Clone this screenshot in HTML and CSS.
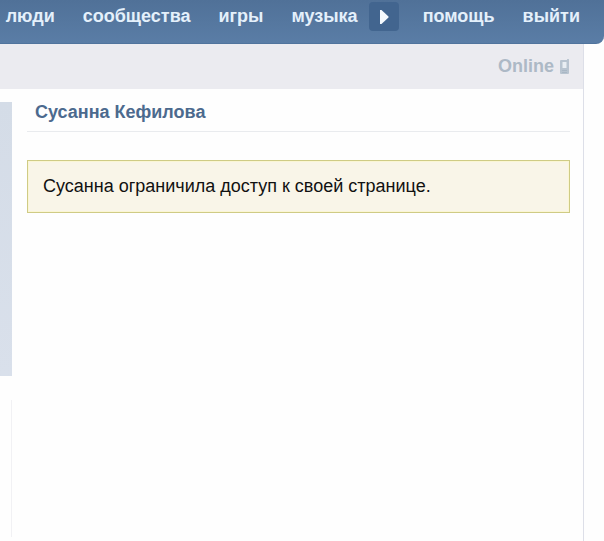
FILE: index.html
```html
<!DOCTYPE html>
<html lang="ru">
<head>
<meta charset="utf-8">
<title>Сусанна Кефилова</title>
<link rel="stylesheet" href="styles.css">
</head>
<body>
<header class="topbar">
  <nav class="nav">
    <a href="#">люди</a>
    <a href="#">сообщества</a>
    <a href="#">игры</a>
    <div class="music">
      <a href="#">музыка</a>
      <button class="play" type="button" aria-label="Слушать">
        <svg width="10" height="16" viewBox="0 0 10 16"><path d="M1 1h1.500l7 6.500v1L2.500 15H1z" fill="#f5fafe"/></svg>
      </button>
    </div>
    <a href="#">помощь</a>
    <a href="#">выйти</a>
  </nav>
</header>
<div class="page">
  <div class="status">
    <span>Online</span>
    <svg width="10" height="16" viewBox="0 0 10 16"><path d="M7 0h2v3H7z" fill="#bcc7d2"/><rect y="1" width="9" height="14" rx="1" fill="#b8c4d0"/><path d="M2.500 3h4v6h-4z" fill="#e9eef3"/><path d="M2 11.500h5M2 13.500h5" stroke="#a9b7c5"/></svg>
  </div>
  <div class="columns">
    <aside class="side">
      <div class="photo"></div>
      <div class="rule"></div>
    </aside>
    <main class="profile">
      <h1>Сусанна Кефилова</h1>
      <p class="notice">Сусанна ограничила доступ к своей странице.</p>
    </main>
  </div>
</div>
</body>
</html>
```
FILE: styles.css
```css
* {
  box-sizing: border-box;
}

body {
  display: flex;
  flex-direction: column;
  min-height: 100vh;
  margin: 0;
  background: #fefefe;
  color: #111;
  font-family: "Liberation Sans", Arial, sans-serif;
  font-size: 18px;
}

.topbar {
  height: 44px;
  padding: 1px 24px 0 0;
  border-bottom: 1px solid #50749d;
  border-radius: 0 0 8px 0;
  background: linear-gradient(#507198, #5a7da6);
}

.nav {
  display: flex;
  align-items: center;
  justify-content: flex-end;
  gap: 28px;
  height: 31px;
  font-weight: bold;
}

.nav a {
  color: #e4f0fb;
  text-decoration: none;
}

.music {
  display: flex;
  align-items: center;
  gap: 11px;
  margin-right: -4px;
}

.play {
  display: flex;
  align-items: center;
  justify-content: center;
  width: 30px;
  height: 29px;
  padding: 0;
  border: 0;
  border-radius: 4px;
  background: #42658f;
}

.page {
  display: flex;
  flex: 1;
  flex-direction: column;
  margin-right: 20px;
  border-right: 1px solid #dddfe8;
}

.status {
  display: flex;
  align-items: center;
  justify-content: flex-end;
  gap: 6px;
  height: 45px;
  padding-right: 13px;
  background: #ebebf0;
  color: #adb9c6;
  font-weight: bold;
}

.columns {
  display: flex;
  flex: 1;
  gap: 15px;
  padding: 13px 13px 4px 0;
}

.side {
  display: flex;
  flex-direction: column;
  gap: 24px;
  width: 12px;
}

.photo {
  height: 274px;
  background: linear-gradient(#d4dce7, #d9e0eb);
}

.rule {
  flex: 1;
  border-right: 1px solid #f1f1f4;
}

.profile {
  flex: 1;
}

h1 {
  height: 30px;
  margin: 0 0 28px;
  padding-left: 8px;
  border-bottom: 1px solid #e9ebee;
  color: #4c6a8e;
  font-size: 18px;
  line-height: 20px;
}

.notice {
  margin: 0;
  padding: 15px;
  border: 1px solid #cfcb85;
  background: #f9f5e8;
  box-shadow: inset 0 0 0 1px #fbf6d4;
  font-size: 18px;
  line-height: 21px;
}
```
